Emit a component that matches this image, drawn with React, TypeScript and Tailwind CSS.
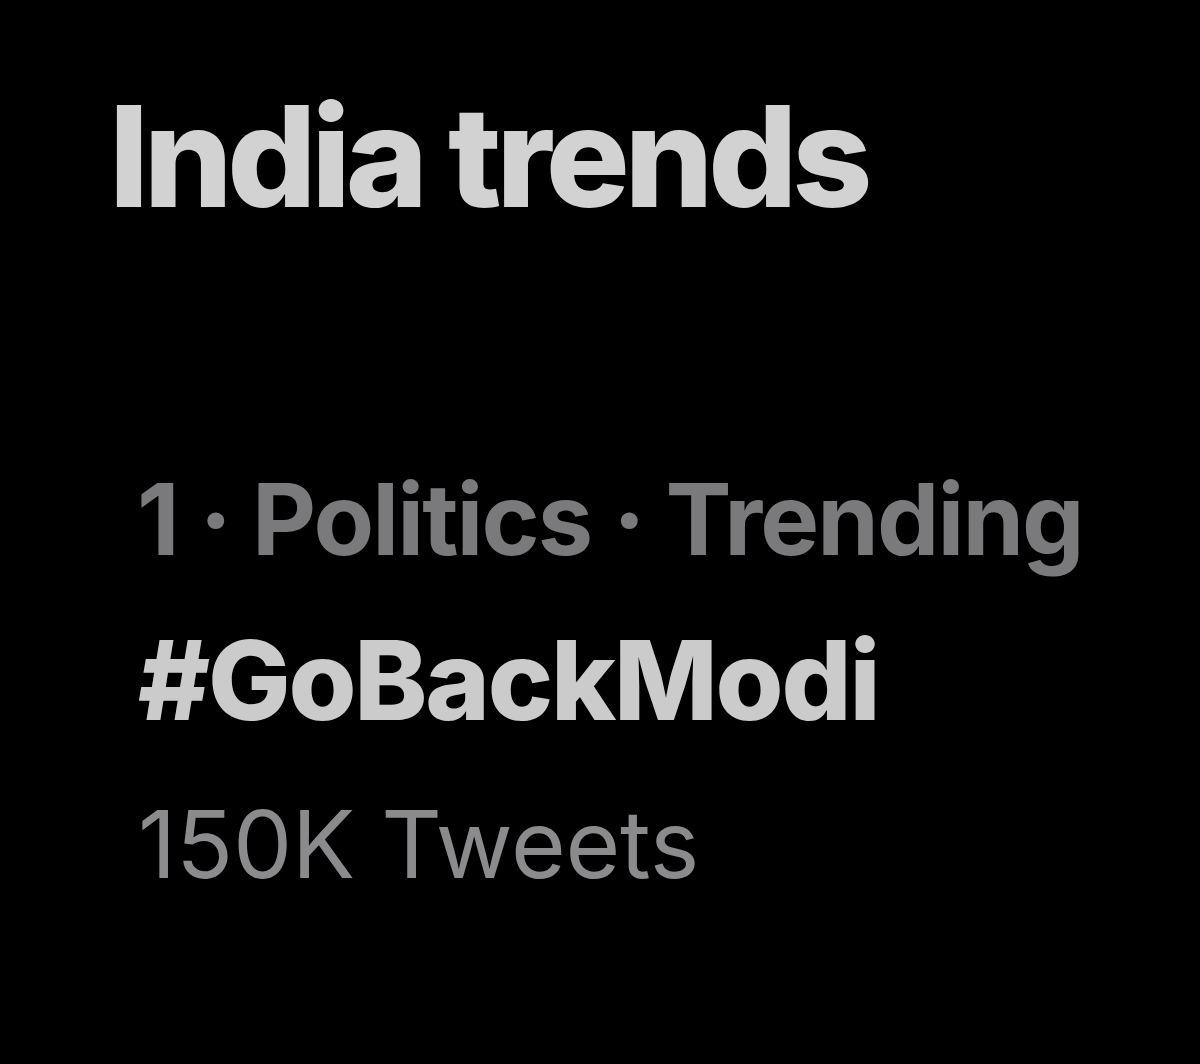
import React from "react";

export default function App() {
  return (
    <div
      className="w-[1200px] h-[1064px] bg-black overflow-hidden flex flex-col"
      style={{ fontFamily: 'Inter, "Liberation Sans", Arial, sans-serif' }}
    >
      <div className="pt-[86px] pl-[109px]">
        <h1 className="text-[140px] leading-none font-extrabold text-[#d2d2d2] tracking-[-5.3px] whitespace-nowrap">
          India trends
        </h1>
      </div>
      <div className="mt-[244px] flex flex-col">
        <div className="pl-[137px] text-[99px] leading-none font-bold text-[#7a7a7c] tracking-[-1.9px] whitespace-nowrap">
          1 · Politics · Trending
        </div>
        <div className="mt-[56px] pl-[138px] text-[110px] leading-none font-extrabold text-[#cbcbcb] tracking-[-2.2px] whitespace-nowrap">
          #GoBackModi
        </div>
        <div className="mt-[62px] pl-[138px] text-[94px] leading-none font-normal text-[#8b8b8d] tracking-[-0.2px] whitespace-nowrap">
          150K Tweets
        </div>
      </div>
    </div>
  );
}
